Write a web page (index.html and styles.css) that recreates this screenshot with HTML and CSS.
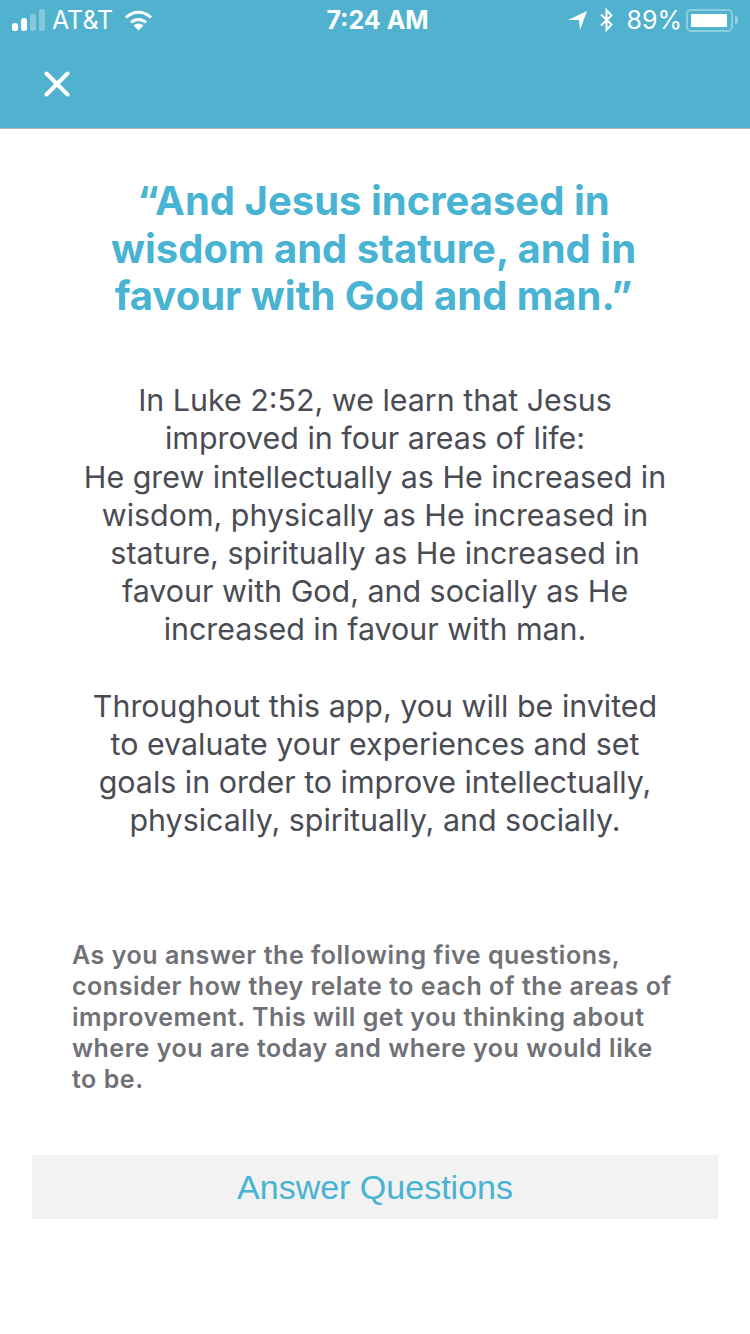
FILE: index.html
```html
<!DOCTYPE html>
<html lang="en">
<head>
    <meta charset="UTF-8">
    <meta name="viewport" content="width=device-width, initial-scale=1.0">
    <title>Answer Questions</title>
    <link rel="stylesheet" href="styles.css">
</head>
<body>
    <header class="top">
        <div class="status">
            <div class="status-left">
                <svg class="signal" width="33" height="22" viewBox="0 0 33 22">
                    <rect x="0" y="14" width="6" height="8" rx="2.5" fill="#fff"/>
                    <rect x="9" y="9" width="6" height="13" rx="2.5" fill="#fff"/>
                    <rect x="18" y="5" width="6" height="17" rx="2.5" fill="#fff" opacity=".3"/>
                    <rect x="27" y="0" width="6" height="22" rx="2.5" fill="#fff" opacity=".3"/>
                </svg>
                <span class="carrier">AT&amp;T</span>
                <svg class="wifi" width="29" height="21" viewBox="0 0 29 21">
                    <path d="M2 7.5C9.5 .5 19.5 .5 27 7.5" fill="none" stroke="#fff" stroke-width="3"/>
                    <path d="M7 12.5C11.5 8.5 17.5 8.5 22 12.5" fill="none" stroke="#fff" stroke-width="3"/>
                    <path d="M9.5 15.5C12.5 12.8 16.5 12.8 19.5 15.5L14.5 20.5Z" fill="#fff"/>
                </svg>
            </div>
            <div class="clock">7:24 AM</div>
            <div class="status-right">
                <svg width="20" height="20" viewBox="0 0 20 20"><path d="M0 10L19 1L12 20L11 10Z" fill="#fff"/></svg>
                <svg class="bt" width="15" height="24" viewBox="0 0 15 24"><path d="M2 6.5L12.5 16.5L7.5 22V2L12.5 7.5L2 17.5" fill="none" stroke="#fff" stroke-width="2"/></svg>
                <span class="percent">89%</span>
                <div class="battery"><div class="battery-fill"></div></div>
                <div class="battery-tip"></div>
            </div>
        </div>
        <div class="nav">
            <svg width="26" height="26" viewBox="0 0 26 26"><path d="M2.5 2.5L23.5 23.5M23.5 2.5L2.5 23.5" stroke="#fff" stroke-width="4" stroke-linecap="round"/></svg>
        </div>
    </header>

    <main class="content">
        <h1>“And Jesus increased in<br>wisdom and stature, and in<br>favour with God and man.”</h1>
        <p class="intro">In Luke 2:52, we learn that Jesus<br>improved in four areas of life:<br>He grew intellectually as He increased in<br>wisdom, physically as He increased in<br>stature, spiritually as He increased in<br>favour with God, and socially as He<br>increased in favour with man.</p>
        <p class="intro">Throughout this app, you will be invited<br>to evaluate your experiences and set<br>goals in order to improve intellectually,<br>physically, spiritually, and socially.</p>
        <p class="note">As you answer the following five questions,<br>consider how they relate to each of the areas of<br>improvement. This will get you thinking about<br>where you are today and where you would like<br>to be.</p>
        <button class="answer" type="button">Answer Questions</button>
    </main>
</body>
</html>
```

FILE: styles.css
```css
body {
    font-family: Inter, "Liberation Sans", sans-serif;
    margin: 0;
    padding: 0;
    background-color: #fff;
}
.top {
    height: 128px;
    background-color: #51b2cf;
    border-bottom: 1px solid #b4b4b4;
    color: #fff;
}
.status {
    display: grid;
    grid-template-columns: 1fr auto 1fr;
    align-items: center;
    height: 40px;
    padding: 0 12px;
    font-size: 25px;
}
.status-left, .status-right {
    display: flex;
    align-items: center;
}
.status-right {
    justify-content: flex-end;
}
.signal {
    margin-right: 7px;
}
.wifi {
    margin-left: 11px;
}
.clock {
    margin-left: 5px;
    font-weight: 700;
}
.bt {
    margin-left: 11px;
}
.percent {
    margin-left: 12px;
}
.battery {
    box-sizing: border-box;
    width: 47px;
    height: 23px;
    margin-left: 4px;
    padding: 3px;
    border: 2px solid rgba(255, 255, 255, 0.35);
    border-radius: 5px;
}
.battery-fill {
    width: 36px;
    height: 100%;
    background: #fff;
}
.battery-tip {
    width: 3px;
    height: 8px;
    margin-left: 2px;
    background: rgba(255, 255, 255, 0.4);
    border-radius: 0 3px 3px 0;
}
.nav {
    display: flex;
    align-items: center;
    height: 87px;
    padding-left: 44px;
    box-sizing: border-box;
}
.content {
    padding: 48px 32px 0;
}
h1 {
    margin: 0;
    padding-right: 3px;
    color: #48b3d2;
    font-size: 40px;
    line-height: 47.5px;
    font-weight: 700;
    text-align: center;
}
.intro {
    margin: 0 0 38px;
    color: #4a4c54;
    font-size: 30.4px;
    line-height: 38.2px;
    text-align: center;
}
h1 + .intro {
    margin-top: 61.6px;
}
.note {
    margin: 100.4px 0 0;
    padding-left: 40px;
    color: #707176;
    font-size: 25px;
    font-weight: 600;
    letter-spacing: 0.54px;
    line-height: 31px;
}
.answer {
    display: block;
    width: 100%;
    height: 64px;
    margin-top: 60px;
    padding-top: 2px;
    border: none;
    background-color: #f2f2f2;
    color: #48b3d2;
    font-family: "Liberation Sans", sans-serif;
    font-size: 34px;
    cursor: pointer;
}
```
